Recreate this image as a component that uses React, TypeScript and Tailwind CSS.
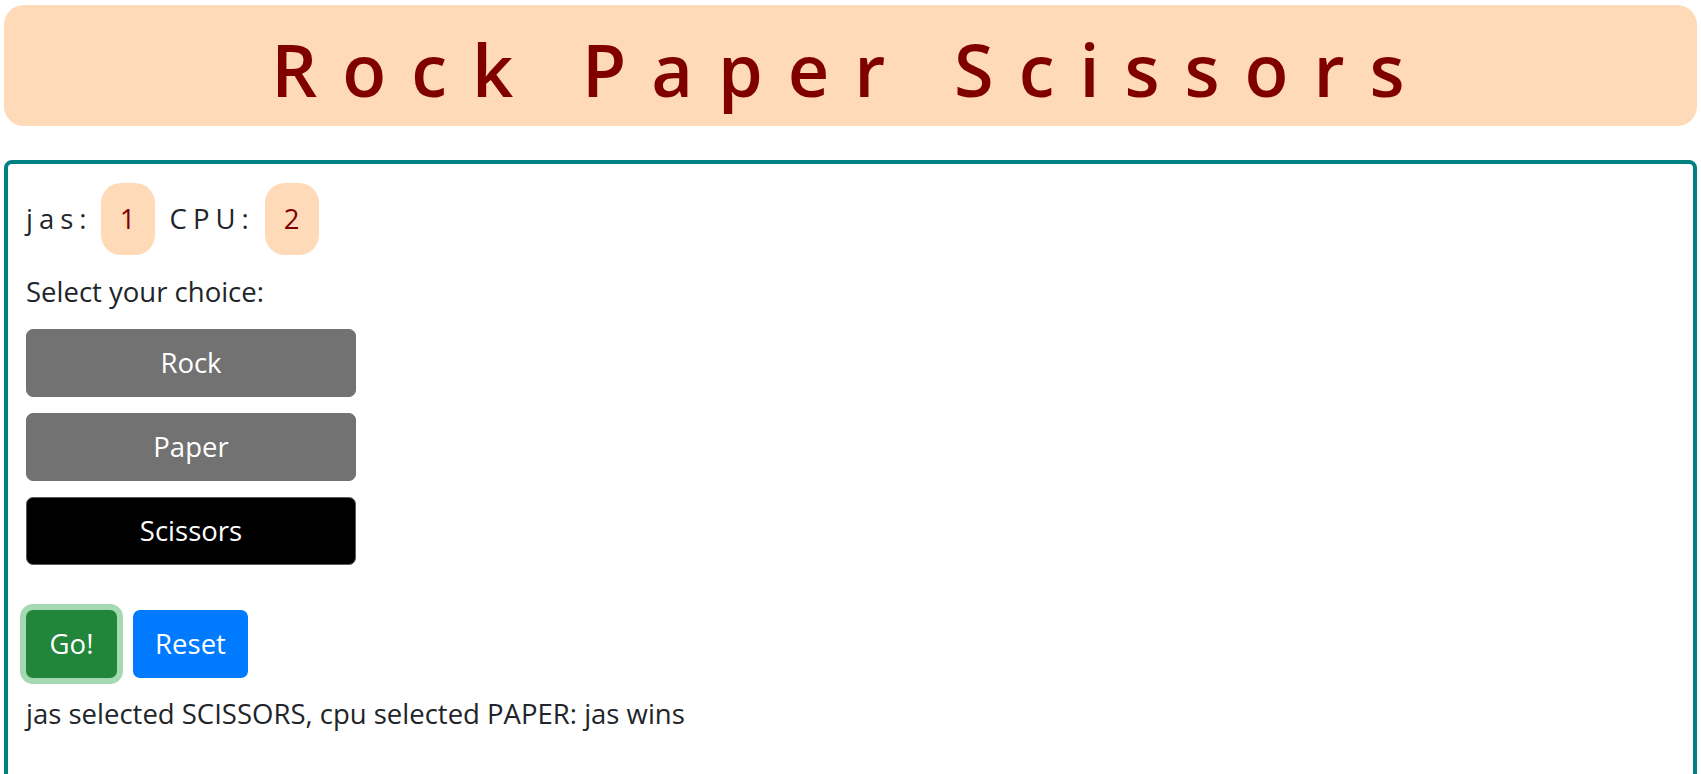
import React, { useState } from 'react';

type Choice = 'ROCK' | 'PAPER' | 'SCISSORS';

const choices: { key: Choice; label: string }[] = [
  { key: 'ROCK', label: 'Rock' },
  { key: 'PAPER', label: 'Paper' },
  { key: 'SCISSORS', label: 'Scissors' },
];

function ScoreBadge({ value }: { value: number }) {
  return (
    <span className="flex h-[72px] w-[54px] items-center justify-center rounded-[20px] bg-[#ffdab9] text-[#800000]">
      {value}
    </span>
  );
}

function App() {
  const [selected, setSelected] = useState<Choice>('SCISSORS');
  const [playerScore] = useState(1);
  const [cpuScore] = useState(2);
  const [result] = useState('jas selected SCISSORS, cpu selected PAPER: jas wins');

  return (
    <div className="min-h-screen bg-white px-1 pt-[5px] font-['Open_Sans',sans-serif] text-[27.5px] text-[#212529]">
      <header className="flex h-[121px] justify-center rounded-[20px] bg-[#ffdab9] pt-[28px]">
        <h1 className="text-[72px] leading-none font-semibold tracking-[25px] text-[#800000]">
          Rock Paper Scissors
        </h1>
      </header>

      <main className="mt-[34px] min-h-[700px] rounded-lg border-4 border-[#008080] px-[18px] pt-[19px]">
        {/* score line */}
        <div className="flex items-center">
          <span className="mr-2 tracking-[6px]">jas:</span>
          <ScoreBadge value={playerScore} />
          <span className="mr-[10px] ml-[15px] tracking-[6px]">CPU:</span>
          <ScoreBadge value={cpuScore} />
        </div>

        <p className="mt-4 leading-[42px]">Select your choice:</p>

        <div className="mt-4 flex flex-col gap-4">
          {choices.map((c) => (
            <button
              key={c.key}
              type="button"
              onClick={() => setSelected(c.key)}
              className={
                selected === c.key
                  ? 'flex h-[68px] w-[330px] items-center justify-center rounded-[7px] border border-[#5a5a5a] bg-black text-white'
                  : 'flex h-[68px] w-[330px] items-center justify-center rounded-[7px] border border-[#727272] bg-[#727272] text-white'
              }
            >
              {c.label}
            </button>
          ))}
        </div>

        <div className="mt-[45px] flex gap-4">
          <button
            type="button"
            className="flex h-[68px] w-[91px] items-center justify-center rounded-[7px] bg-[#22863a] text-white ring-[6px] ring-[#a5d9b1]"
          >
            Go!
          </button>
          <button
            type="button"
            className="flex h-[68px] w-[115px] items-center justify-center rounded-[7px] bg-[#007bff] text-white"
          >
            Reset
          </button>
        </div>

        <p className="mt-[15px] leading-[42px]">{result}</p>
      </main>
    </div>
  );
}

export default App;
